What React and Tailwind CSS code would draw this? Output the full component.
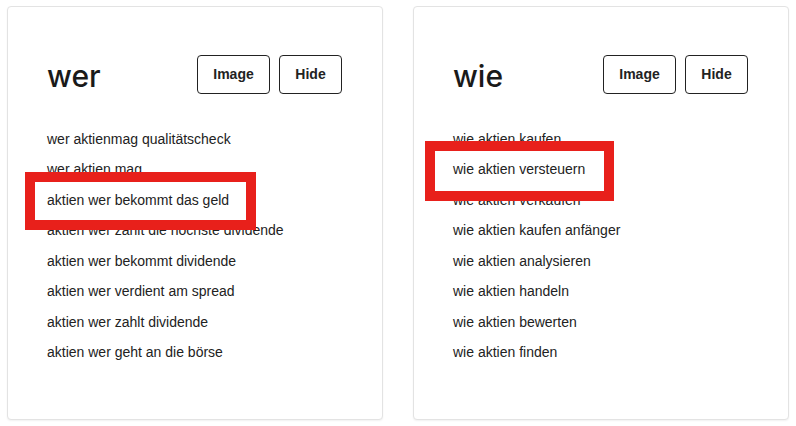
const cards = [
  {
    term: "wer",
    items: [
      "wer aktienmag qualitätscheck",
      "wer aktien mag",
      "aktien wer bekommt das geld",
      "aktien wer zahlt die höchste dividende",
      "aktien wer bekommt dividende",
      "aktien wer verdient am spread",
      "aktien wer zahlt dividende",
      "aktien wer geht an die börse",
    ],
    mark: "left-[17px] top-[165px] w-[231px] h-[58px]",
  },
  {
    term: "wie",
    items: [
      "wie aktien kaufen",
      "wie aktien versteuern",
      "wie aktien verkaufen",
      "wie aktien kaufen anfänger",
      "wie aktien analysieren",
      "wie aktien handeln",
      "wie aktien bewerten",
      "wie aktien finden",
    ],
    mark: "left-[11px] top-[134px] w-[189px] h-[60px]",
  },
];

function Card({ term, items, mark }) {
  return (
    <div className="relative h-[414px] bg-white border border-[#e3e3e3] rounded-[4px] shadow-[0_1px_2px_rgba(0,0,0,0.06)] pl-[39px] pr-[40px] pt-[48px]">
      {/* Kopfzeile */}
      <div className="flex items-center justify-between h-[39px]">
        <h2 className="font-['Inter',sans-serif] text-[30px] font-medium text-[#1a1a1a] leading-none pt-[2px]">
          {term}
        </h2>
        <div className="flex gap-[9px]">
          <button className="h-[39px] w-[73px] border border-[#222] rounded-[4px] text-[14px] font-bold text-[#222]">
            Image
          </button>
          <button className="h-[39px] w-[63px] border border-[#222] rounded-[4px] text-[14px] font-bold text-[#222]">
            Hide
          </button>
        </div>
      </div>

      {/* Vorschläge */}
      <ul className="mt-[30px]">
        {items.map((t) => (
          <li key={t} className="h-[30.45px] leading-[30.45px] text-[14px] text-[#222]">
            {t}
          </li>
        ))}
      </ul>

      {/* Markierung */}
      <div className={`absolute border-[10px] border-[#e8201b] ${mark}`} />
    </div>
  );
}

export default function App() {
  return (
    <div
      className="w-[796px] h-[426px] bg-white px-[7px] pt-[6px] grid grid-cols-2 gap-[30px]"
      style={{ fontFamily: '"Liberation Sans", Arial, sans-serif' }}
    >
      {cards.map((c) => (
        <Card key={c.term} {...c} />
      ))}
    </div>
  );
}
